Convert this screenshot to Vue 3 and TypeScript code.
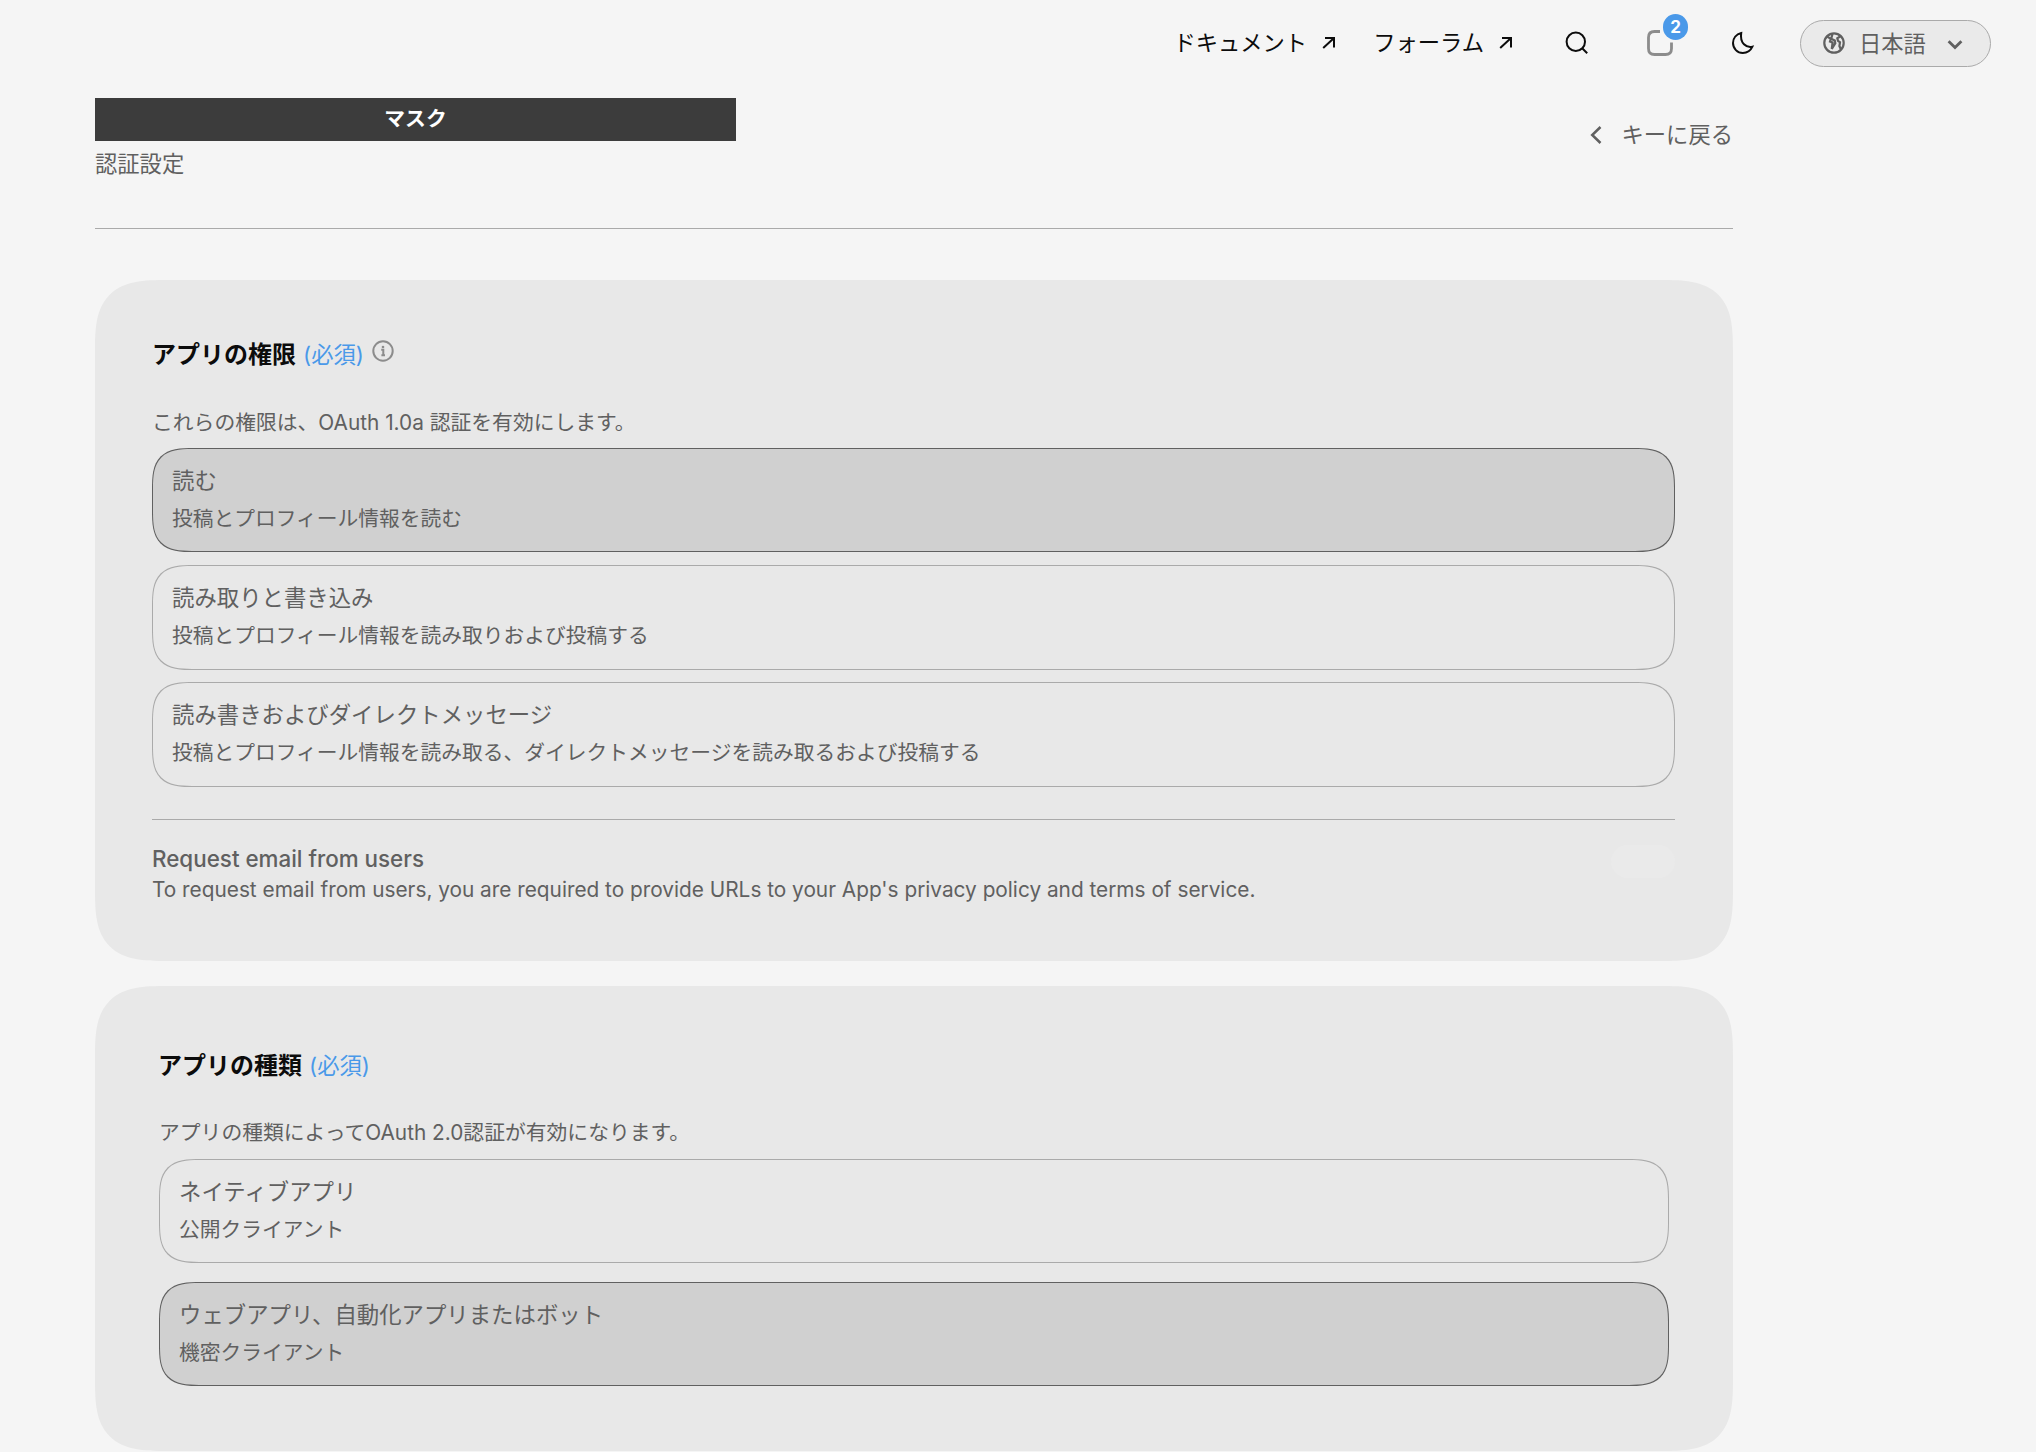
<script setup lang="ts">
interface Option {
  title: string
  detail: string
  selected: boolean
}

const permissions: Option[] = [
  { title: '読む', detail: '投稿とプロフィール情報を読む', selected: true },
  { title: '読み取りと書き込み', detail: '投稿とプロフィール情報を読み取りおよび投稿する', selected: false },
  {
    title: '読み書きおよびダイレクトメッセージ',
    detail: '投稿とプロフィール情報を読み取る、ダイレクトメッセージを読み取るおよび投稿する',
    selected: false,
  },
]

const appTypes: Option[] = [
  { title: 'ネイティブアプリ', detail: '公開クライアント', selected: false },
  { title: 'ウェブアプリ、自動化アプリまたはボット', detail: '機密クライアント', selected: true },
]
</script>

<template>
  <div class="page">
    <header class="topbar">
      <a class="link docs">ドキュメント
        <svg width="14" height="14" viewBox="0 0 14 14"><path d="M1.2 12 12 1.9M3 1.9H12V11.5" /></svg>
      </a>
      <a class="link forum">フォーラム
        <svg width="14" height="14" viewBox="0 0 14 14"><path d="M1.2 12 12 1.9M3 1.9H12V11.5" /></svg>
      </a>
      <svg class="search" width="24" height="24" viewBox="0 0 24 24">
        <circle cx="10.8" cy="10.8" r="9.2" /><path d="M17.2 17.2 22.2 22.2" />
      </svg>
      <div class="inbox">
        <svg width="28" height="28" viewBox="0 0 28 28">
          <path d="M14 2.5H8.5Q2.5 2.5 2.5 8.5V19.5Q2.5 25.5 8.5 25.5H19.5Q25.5 25.5 25.5 19.5V13.6" />
        </svg>
        <span class="badge">2</span>
      </div>
      <svg class="moon" width="24" height="24" viewBox="0 0 24 24">
        <path d="M10.2 2C5.4 3.2 2 7.2 2 12.1 2 17.6 6.4 22 11.8 22c4.2 0 7.8-2.3 9.6-6.3C15.5 17 8.6 12.5 10.2 2Z" />
      </svg>
      <button class="lang">
        <svg class="globe" width="22" height="22" viewBox="0 0 22 22">
          <circle cx="11" cy="11" r="9.7" />
          <path d="M4.2 4.6 7.8 6.8 7 9.5 9.6 10.4 8.800 16.8 12.3 11.2 11.8 8.4 8.2 6.8 9.5 2M17.5 4.3 14.3 6.2 15 8.9 17 10.3 16.4 14 17.8 17.2" />
        </svg>
        <span>日本語</span>
        <svg class="chev" width="16" height="12" viewBox="0 0 16 12"><path d="M1.6 2.2 8 8.6 14.4 2.2" /></svg>
      </button>
    </header>

    <main class="content">
      <div class="head">
        <div>
          <div class="mask">マスク</div>
          <div class="subtitle">認証設定</div>
        </div>
        <a class="back">
          <svg width="12" height="20" viewBox="0 0 12 20"><path d="M10.5 2 2.2 10 10.5 18" /></svg>
          <span>キーに戻る</span>
        </a>
      </div>

      <section class="card permissions">
        <h2>
          <b>アプリの権限</b><span class="required">(必須)</span>
          <svg class="info" width="22" height="22" viewBox="0 0 22 22">
            <circle cx="11" cy="11" r="9.7" /><path d="M9.2 9.7H11.3V15.600M9.400 15.2H13" />
            <circle class="dot" cx="11" cy="7" r="1.3" />
          </svg>
        </h2>
        <p class="lead">これらの権限は、OAuth 1.0a 認証を有効にします。</p>
        <div class="options">
          <div v-for="o in permissions" :key="o.title" class="option" :class="{ selected: o.selected }">
            <div class="title">{{ o.title }}</div>
            <div class="detail">{{ o.detail }}</div>
          </div>
        </div>
        <div class="email">
          <div>
            <div class="email-title">Request email from users</div>
            <div class="email-detail">To request email from users, you are required to provide URLs to your App's privacy policy and terms of service.</div>
          </div>
          <span class="toggle"></span>
        </div>
      </section>

      <section class="card types">
        <h2><b>アプリの種類</b><span class="required">(必須)</span></h2>
        <p class="lead">アプリの種類によってOAuth 2.0認証が有効になります。</p>
        <div class="options">
          <div v-for="o in appTypes" :key="o.title" class="option" :class="{ selected: o.selected }">
            <div class="title">{{ o.title }}</div>
            <div class="detail">{{ o.detail }}</div>
          </div>
        </div>
      </section>
    </main>
  </div>
</template>

<style>
body {
  background: #f5f5f5;
}
</style>

<style scoped>
.page {
  width: 2036px;
  height: 1452px;
  overflow: hidden;
  background: #f5f5f5;
  color: #606060;
  font-family: Inter, "Noto Sans CJK JP", sans-serif;
  font-size: 22.3px;
}
.page * {
  box-sizing: border-box;
}
svg {
  fill: none;
  stroke: currentColor;
  stroke-width: 2;
  flex: none;
}
.topbar {
  display: flex;
  align-items: center;
  justify-content: flex-end;
  height: 86px;
  padding-right: 45px;
  color: #0c0c0c;
}
.link {
  display: flex;
  align-items: center;
  gap: 15px;
  height: 32px;
  padding-bottom: 1px;
  line-height: 32px;
}
.docs {
  margin-right: 37px;
}
.forum {
  margin-right: 52px;
}
.search {
  margin-right: 57px;
}
.inbox {
  position: relative;
  width: 28px;
  height: 28px;
  margin-right: 57px;
  color: #8c8c8c;
}
.inbox svg {
  display: block;
  stroke-width: 2.8;
}
.badge {
  position: absolute;
  left: 17px;
  top: -15px;
  width: 25px;
  height: 26px;
  border-radius: 13px;
  background: #4a99e9;
  color: #fff;
  font-size: 17px;
  font-weight: 700;
  line-height: 26px;
  text-align: center;
}
.moon {
  margin-right: 45px;
}
.lang {
  display: flex;
  align-items: center;
  width: 191px;
  height: 47px;
  padding: 0 0 0 22px;
  border: 1px solid #aaa;
  border-radius: 24px;
  background: #eaeaea;
  color: #606060;
  font: inherit;
}
.lang span {
  margin: 0 21px 2px 14px;
}
.globe {
  stroke-width: 2.2;
}
.chev {
  margin-top: 3px;
  stroke-width: 2.8;
}
.content {
  width: 1638px;
  margin-left: 95px;
}
.head {
  display: flex;
  justify-content: space-between;
  height: 143px;
  padding-top: 12px;
  border-bottom: 1px solid #aaa;
}
.mask {
  width: 641px;
  height: 43px;
  background: #3c3c3c;
  color: #fff;
  font-size: 20.8px;
  font-weight: 700;
  line-height: 41px;
  text-align: center;
}
.subtitle {
  margin-top: 7px;
  line-height: 32px;
}
.back {
  display: flex;
  align-items: center;
  gap: 20px;
  height: 32px;
  margin-top: 20px;
}
.back svg {
  margin-top: 1px;
  stroke-width: 2.5;
}
.back span {
  margin-bottom: 2px;
}
.card {
  background: #e8e8e8;
  border-radius: 72px;
  corner-shape: superellipse(1.6);
}
.permissions {
  height: 681px;
  margin-top: 51px;
  padding: 57px 58px 0 57px;
}
.types {
  height: 465px;
  margin-top: 25px;
  padding: 62px 64px 0;
}
h2 {
  display: flex;
  align-items: center;
  height: 36px;
  margin: 0;
  font-size: 24px;
  line-height: 36px;
  color: #0c0c0c;
}
.types h2 b {
  margin-left: -1px;
}
h2 b {
  font-weight: 700;
}
.required {
  margin-left: 7px;
  font-size: 22.3px;
  font-weight: 400;
  color: #4a99e9;
}
.info {
  margin: -9px 0 0 8px;
  color: #8c8c8c;
}
.info .dot {
  fill: currentColor;
  stroke: none;
}
.lead {
  margin: 34px 0 9px;
  height: 32px;
  font-size: 20.8px;
  line-height: 32px;
}
.types .lead {
  margin-top: 33px;
  margin-bottom: 10px;
}
.options {
  display: flex;
  flex-direction: column;
  gap: 12px;
}
.option {
  height: 105px;
  padding: 16px 19px;
  border: 1px solid #aaa;
  border-radius: 42px;
  corner-shape: superellipse(1.6);
}
.selected {
  height: 104px;
  background: #d0d0d0;
  border-color: #606060;
}
.selected + .option {
  margin-top: 1px;
}
.title {
  line-height: 32px;
  font-size: 22.4px;
}
.detail {
  margin-top: 6px;
  font-size: 20.75px;
  line-height: 32px;
}
.email {
  display: flex;
  justify-content: space-between;
  margin-top: 32px;
  padding-top: 25px;
  border-top: 1px solid #aaa;
}
.email-title {
  margin-top: -1px;
  font-size: 22.4px;
  font-weight: 500;
  line-height: 30px;
}
.email-detail {
  margin-top: 1px;
  font-size: 20.8px;
  line-height: 30px;
}
.toggle {
  width: 64px;
  height: 33px;
  border-radius: 17px;
  background: #eaeaea;
}
.types .options {
  gap: 19px;
}
.types .option {
  height: 104px;
}
</style>
